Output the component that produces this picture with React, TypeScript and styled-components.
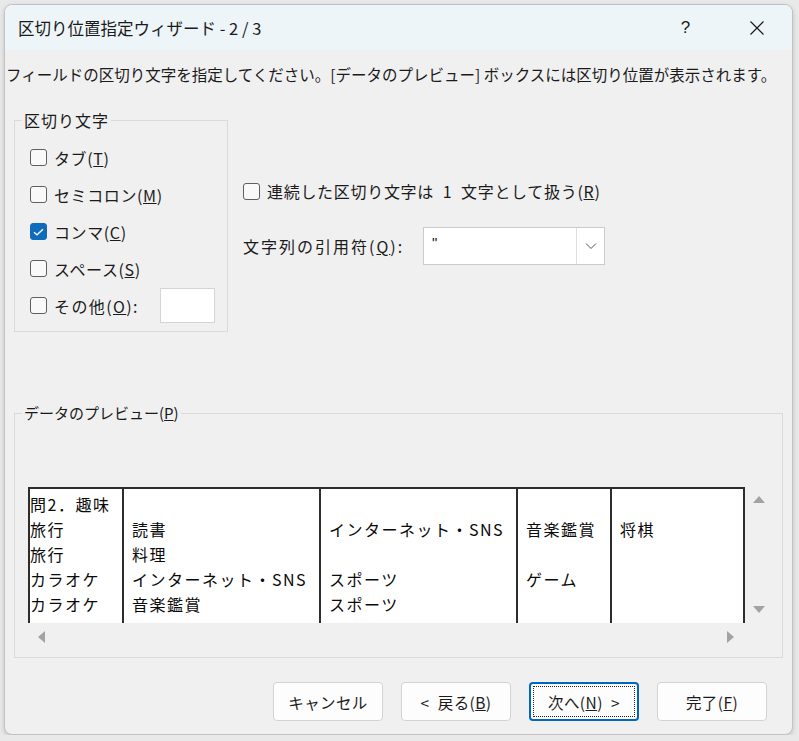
import React from 'react'
import styled, { createGlobalStyle, css } from 'styled-components'

const GlobalStyle = createGlobalStyle`
  html, body {
    margin: 0;
    padding: 0;
    background: #e9e9e9;
  }
  body {
    font-family: 'Noto Sans CJK JP', 'Noto Sans', sans-serif;
    color: #1b1b1b;
  }
`

const Window = styled.div`
  margin: 4px 0 0 4px;
  width: 789px;
  height: 731px;
  box-sizing: border-box;
  border: 1px solid #c2c2c2;
  border-radius: 8px;
  background: #f0f0f0;
  box-shadow: 0 2px 5px rgba(0, 0, 0, 0.16);
  overflow: hidden;
  display: flex;
  flex-direction: column;
`

const TitleBar = styled.div`
  height: 45px;
  flex: none;
  display: flex;
  align-items: center;
  padding-left: 13px;
  background: #eef5f8;
  font-size: 16.5px;
`

const Caption = styled.span`
  flex: 1;
`

const CaptionButton = styled.div`
  width: 71px;
  height: 45px;
  display: flex;
  align-items: center;
  justify-content: center;
  font-size: 17px;
  font-family: 'Liberation Sans', sans-serif;
`

const Instruction = styled.p`
  margin: 14px 0 0 1px;
  font-size: 15.5px;
  line-height: 20px;
  white-space: nowrap;
`

const TopSection = styled.div`
  display: flex;
  margin: 26px 0 0 9px;
`

const GroupBox = styled.fieldset<{ $w: number; $h: number }>`
  margin: 0;
  padding: 0;
  width: ${(p) => p.$w}px;
  height: ${(p) => p.$h}px;
  box-sizing: border-box;
  border: 1px solid #dadada;
  min-width: 0;
`

const Legend = styled.legend<{ $size?: number; $spacing?: number }>`
  margin-left: 7px;
  padding: 0 2px;
  font-size: ${(p) => p.$size ?? 15}px;
  letter-spacing: ${(p) => p.$spacing ?? 0}px;
  line-height: 20px;
`

const CheckList = styled.div`
  display: flex;
  flex-direction: column;
  padding: 9px 12px 0 15px;
`

const CheckRow = styled.label<{ $h?: number; $spacing?: number }>`
  display: flex;
  align-items: center;
  height: ${(p) => p.$h ?? 37}px;
  font-size: 16px;
  letter-spacing: ${(p) => p.$spacing ?? 0.6}px;
  white-space: nowrap;
`

const Box = styled.span<{ $checked?: boolean }>`
  width: 17px;
  height: 17px;
  flex: none;
  box-sizing: border-box;
  border-radius: 3px;
  margin-right: 7px;
  display: flex;
  align-items: center;
  justify-content: center;
  ${(p) =>
    p.$checked
      ? css`
          background: #0f6cbd;
          border: 1px solid #0f6cbd;
        `
      : css`
          background: #f9f9f9;
          border: 1px solid #5f5f5f;
        `}
`

const SmallInput = styled.span`
  width: 55px;
  height: 35px;
  box-sizing: border-box;
  margin-left: auto;
  background: #fff;
  border: 1px solid #d4d4d4;
`

const RightColumn = styled.div`
  display: flex;
  flex-direction: column;
  margin-left: 15px;
  padding-top: 70px;
`

const QuoteRow = styled.div`
  display: flex;
  align-items: center;
  margin-top: 25px;
`

const QuoteLabel = styled.span`
  width: 180px;
  font-size: 16px;
  letter-spacing: 2px;
  white-space: nowrap;
`

const Combo = styled.div`
  width: 182px;
  height: 38px;
  box-sizing: border-box;
  display: flex;
  background: #fff;
  border: 1px solid #cacaca;
`

const ComboValue = styled.span`
  flex: 1;
  padding: 6px 0 0 8px;
  font-size: 15px;
  font-family: 'Liberation Sans', sans-serif;
`

const ComboButton = styled.span`
  width: 27px;
  border-left: 1px solid #dedede;
  display: flex;
  align-items: center;
  justify-content: center;
`

const PreviewGroup = styled(GroupBox)`
  margin: 71px 0 0 9px;
  display: flex;
  flex-direction: column;
`

const PreviewArea = styled.div`
  display: grid;
  grid-template-columns: 717px 28px;
  grid-template-rows: 136px 27px;
  margin: 64px 0 0 13px;
`

const Table = styled.div`
  display: flex;
  background: #fff;
  border-top: 2px solid #2d2d2d;
  box-sizing: border-box;
  overflow: hidden;
`

const Column = styled.div<{ $w: number; $first?: boolean; $last?: boolean }>`
  width: ${(p) => p.$w}px;
  flex: none;
  box-sizing: border-box;
  border-left: 2px solid #2d2d2d;
  ${(p) => p.$last && 'border-right: 2px solid #2d2d2d;'}
  padding: 3px 0 0 ${(p) => (p.$first ? 0 : 8)}px;
  font-size: 16px;
  line-height: 25px;
  letter-spacing: 1.5px;
  color: #0a0a0a;
  white-space: nowrap;
  overflow: hidden;
`

const Cell = styled.div`
  height: 25px;
`

const VScroll = styled.div`
  display: flex;
  flex-direction: column;
  justify-content: space-between;
  align-items: center;
  padding: 8px 0 9px;
`

const HScroll = styled.div`
  display: flex;
  justify-content: space-between;
  align-items: center;
  padding: 0 9px 0 8px;
`

const ButtonRow = styled.div`
  display: flex;
  justify-content: flex-end;
  gap: 18px;
  margin: 24px 25px 0 0;
`

const Button = styled.button<{ $focused?: boolean }>`
  width: 110px;
  height: 39px;
  box-sizing: border-box;
  padding: 0;
  border-radius: 4px;
  background: #fdfdfd;
  font-family: inherit;
  font-size: 15.5px;
  letter-spacing: 0.4px;
  color: #1b1b1b;
  white-space: pre;
  position: relative;
  ${(p) =>
    p.$focused
      ? css`
          border: 2px solid #0067c0;
          &::after {
            content: '';
            position: absolute;
            inset: 2px;
            border: 1px dotted #222;
          }
        `
      : css`
          border: 1px solid #d3d3d3;
        `}
`

const Arrow = ({ dir }: { dir: 'up' | 'down' | 'left' | 'right' }) => {
  const pts = {
    up: '0,8 6,1 12,8',
    down: '0,2 6,9 12,2',
    left: '9,0 2,6 9,12',
    right: '1,0 8,6 1,12',
  }[dir]
  const vertical = dir === 'up' || dir === 'down'
  return (
    <svg width={vertical ? 12 : 10} height={vertical ? 10 : 12} viewBox={vertical ? '0 0 12 10' : '0 0 10 12'}>
      <polygon points={pts} fill="#a3a3a3" />
    </svg>
  )
}

const Check = ({ label, keyChar, checked }: { label: string; keyChar: string; checked?: boolean }) => (
  <CheckRow>
    <Box $checked={checked}>
      {checked && (
        <svg width="11" height="8" viewBox="0 0 11 8">
          <path d="M1 4.2 L4 6.8 L10 1.2" fill="none" stroke="#fff" strokeWidth="1.3" />
        </svg>
      )}
    </Box>
    {label}(<u>{keyChar}</u>)
  </CheckRow>
)

const columns: { w: number; cells: string[] }[] = [
  { w: 94, cells: ['問2．趣味', '旅行', '旅行', 'カラオケ', 'カラオケ'] },
  { w: 197, cells: ['', '読書', '料理', 'インターネット・SNS', '音楽鑑賞'] },
  { w: 197, cells: ['', 'インターネット・SNS', '', 'スポーツ', 'スポーツ'] },
  { w: 94, cells: ['', '音楽鑑賞', '', 'ゲーム', ''] },
  { w: 135, cells: ['', '将棋', '', '', ''] },
]

export default function App() {
  return (
    <>
      <GlobalStyle />
      <Window>
        <TitleBar>
          <Caption>区切り位置指定ウィザード - 2 / 3</Caption>
          <CaptionButton>?</CaptionButton>
          <CaptionButton>
            <svg width="16" height="16" viewBox="0 0 16 16">
              <path d="M1.5 1.5 L14.5 14.5 M14.5 1.5 L1.5 14.5" stroke="#1b1b1b" strokeWidth="1.2" />
            </svg>
          </CaptionButton>
        </TitleBar>

        <Instruction>
          フィールドの区切り文字を指定してください。[データのプレビュー] ボックスには区切り位置が表示されます。
        </Instruction>

        <TopSection>
          <GroupBox $w={214} $h={222}>
            <Legend $size={16} $spacing={1}>
              区切り文字
            </Legend>
            <CheckList>
              <Check label="タブ" keyChar="T" />
              <Check label="セミコロン" keyChar="M" />
              <Check label="コンマ" keyChar="C" checked />
              <Check label="スペース" keyChar="S" />
              <CheckRow $spacing={1.4}>
                <Box />
                その他(<u>O</u>):
                <SmallInput />
              </CheckRow>
            </CheckList>
          </GroupBox>

          <RightColumn>
            <CheckRow $h={22} $spacing={0.7}>
              <Box />
              連続した区切り文字は{'\u2002'}1{'\u2002'}文字として扱う(<u>R</u>)
            </CheckRow>
            <QuoteRow>
              <QuoteLabel>
                文字列の引用符(<u>Q</u>):
              </QuoteLabel>
              <Combo>
                <ComboValue>"</ComboValue>
                <ComboButton>
                  <svg width="12" height="8" viewBox="0 0 12 8">
                    <path d="M1 1.5 L6 6.5 L11 1.5" fill="none" stroke="#555" strokeWidth="1" />
                  </svg>
                </ComboButton>
              </Combo>
            </QuoteRow>
          </RightColumn>
        </TopSection>

        <PreviewGroup $w={769} $h={255}>
          <Legend>
            データのプレビュー(<u>P</u>)
          </Legend>
          <PreviewArea>
            <Table>
              {columns.map((c, i) => (
                <Column key={i} $w={c.w} $first={i === 0} $last={i === columns.length - 1}>
                  {c.cells.map((t, j) => (
                    <Cell key={j}>{t}</Cell>
                  ))}
                </Column>
              ))}
            </Table>
            <VScroll>
              <Arrow dir="up" />
              <Arrow dir="down" />
            </VScroll>
            <HScroll>
              <Arrow dir="left" />
              <Arrow dir="right" />
            </HScroll>
          </PreviewArea>
        </PreviewGroup>

        <ButtonRow>
          <Button>キャンセル</Button>
          <Button>
            {'<\u2002'}戻る(<u>B</u>)
          </Button>
          <Button $focused>
            次へ(<u>N</u>){'\u2002>'}
          </Button>
          <Button>
            完了(<u>F</u>)
          </Button>
        </ButtonRow>
      </Window>
    </>
  )
}
